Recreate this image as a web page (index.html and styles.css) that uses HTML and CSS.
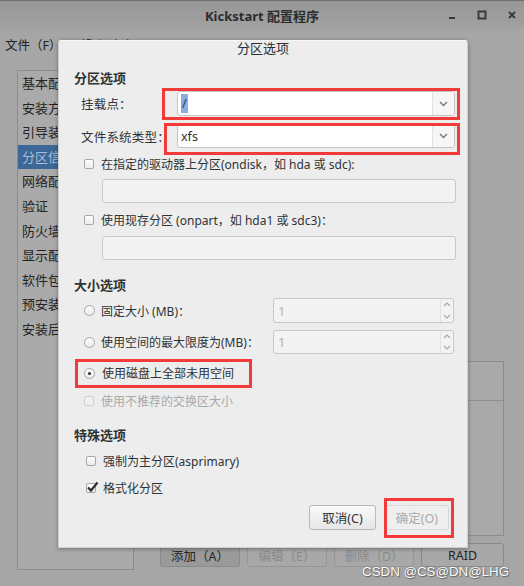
FILE: index.html
```html
<!DOCTYPE html>
<html lang="zh">
<head>
<meta charset="utf-8">
<title>Kickstart 配置程序</title>
<link rel="stylesheet" href="styles.css">
</head>
<body>
<div class="window">
  <div class="titlebar">
    <div></div>
    <div class="wtitle">Kickstart 配置程序</div>
    <div class="wctrls">
      <svg class="wc" width="10" height="10" viewBox="0 0 10 10"><rect x="2" y="7" width="6" height="2" fill="#3a3a3a"/></svg>
      <svg class="wc" width="10" height="10" viewBox="0 0 10 10"><rect x="1.5" y="1.5" width="7" height="7" fill="none" stroke="#3a3a3a" stroke-width="2"/></svg>
      <svg class="wc" width="10" height="10" viewBox="0 0 10 10"><path d="M2 2 L8 8 M8 2 L2 8" stroke="#3a3a3a" stroke-width="2"/></svg>
    </div>
  </div>
  <div class="menubar">
    <span class="menu">文件（F）</span>
    <span class="menu">帮助（H）</span>
  </div>
  <div class="main">
    <ul class="navlist">
      <li>基本配置</li>
      <li>安装方法</li>
      <li>引导装载程序选项</li>
      <li class="active">分区信息</li>
      <li>网络配置</li>
      <li>验证</li>
      <li>防火墙配置</li>
      <li>显示配置</li>
      <li>软件包选择</li>
      <li>预安装脚本</li>
      <li>安装后脚本</li>
    </ul>
    <div class="rightcol">
      <div class="table">
        <div class="thead"></div>
      </div>
      <div class="wbtns">
        <div class="wbtn pressed">添加（A）</div>
        <div class="wbtn off">编辑（E）</div>
        <div class="wbtn off">删除（D）</div>
        <div class="wbtn raid">RAID</div>
      </div>
    </div>
  </div>

  <div class="dialog">
    <div class="dtitle">分区选项</div>

    <div class="heading">分区选项</div>

    <div class="frow r1">
      <span class="flabel">挂载点：</span>
      <div class="combo h25">
        <div class="ctext focus"><span class="sel">/</span></div>
        <div class="cbtn"><svg width="9" height="6" viewBox="0 0 9 6"><path d="M1 1 L4.5 4.5 L8 1" fill="none" stroke="#777" stroke-width="1.4"/></svg></div>
      </div>
    </div>
    <div class="frow r2">
      <span class="flabel">文件系统类型：</span>
      <div class="combo h24">
        <div class="ctext">xfs</div>
        <div class="cbtn"><svg width="9" height="6" viewBox="0 0 9 6"><path d="M1 1 L4.5 4.5 L8 1" fill="none" stroke="#777" stroke-width="1.4"/></svg></div>
      </div>
    </div>

    <div class="crow c1"><span class="cbox"></span><span>在指定的驱动器上分区(ondisk，如 hda 或 sdc):</span></div>
    <div class="entry e1"></div>
    <div class="crow c2"><span class="cbox"></span><span>使用现存分区 (onpart，如 hda1 或 sdc3)：</span></div>
    <div class="entry e2"></div>

    <div class="heading h2">大小选项</div>

    <div class="srow s1">
      <span class="radio"></span><span>固定大小 (MB)：</span>
      <div class="spin h25"><span class="sval">1</span><div class="sarrows">
        <svg width="8" height="5" viewBox="0 0 8 5"><path d="M1 4 L4 1 L7 4" fill="none" stroke="#a8a8a8" stroke-width="1.2"/></svg>
        <svg width="8" height="5" viewBox="0 0 8 5"><path d="M1 1 L4 4 L7 1" fill="none" stroke="#a8a8a8" stroke-width="1.2"/></svg>
      </div></div>
    </div>
    <div class="srow s2">
      <span class="radio"></span><span>使用空间的最大限度为(MB)：</span>
      <div class="spin h24"><span class="sval">1</span><div class="sarrows">
        <svg width="8" height="5" viewBox="0 0 8 5"><path d="M1 4 L4 1 L7 4" fill="none" stroke="#a8a8a8" stroke-width="1.2"/></svg>
        <svg width="8" height="5" viewBox="0 0 8 5"><path d="M1 1 L4 4 L7 1" fill="none" stroke="#a8a8a8" stroke-width="1.2"/></svg>
      </div></div>
    </div>
    <div class="crow s3"><span class="radio on"></span><span>使用磁盘上全部未用空间</span></div>
    <div class="crow s4 disabled"><span class="cbox dis"></span><span>使用不推荐的交换区大小</span></div>

    <div class="heading h3">特殊选项</div>

    <div class="crow k1"><span class="cbox"></span><span>强制为主分区(asprimary)</span></div>
    <div class="crow k2"><span class="cbox checked"><svg width="13" height="12" viewBox="0 0 13 12"><path d="M2 6.5 L5 9.5 L11.5 1.5" fill="none" stroke="#2e2e2e" stroke-width="2.2"/></svg></span><span>格式化分区</span></div>

    <div class="dbtns">
      <div class="btn">取消(C)</div>
      <div class="btn off">确定(O)</div>
    </div>

    <div class="mark m1"></div>
    <div class="mark m2"></div>
    <div class="mark m3"></div>
    <div class="mark m4"></div>
  </div>

  <div class="watermark">CSDN @CS@DN@LHG</div>
</div>
</body>
</html>
```

FILE: styles.css
```css
* { box-sizing: border-box; }
html, body { margin: 0; padding: 0; }
body {
  font-family: "Noto Sans", "Noto Sans CJK SC", sans-serif;
  font-size: 12px;
  color: #2e3436;
}
.window {
  position: relative;
  width: 524px;
  height: 586px;
  background: #a6a6a6;
  overflow: hidden;
}
.titlebar {
  height: 30px;
  display: grid;
  grid-template-columns: 1fr auto 1fr;
  align-items: center;
  background: linear-gradient(#979797, #a2a2a2);
  border-top: 1px solid #6e6e6e;
}
.wtitle {
  font-weight: bold;
  font-size: 13px;
  color: #2c2c2c;
}
.wctrls {
  display: flex;
  justify-content: flex-end;
  gap: 20px;
  padding-right: 7px;
  padding-bottom: 1px;
}
.menubar {
  height: 28px;
  display: flex;
  align-items: center;
  gap: 18px;
  padding-left: 5px;
  font-size: 12.5px;
  color: #222;
}
.main {
  display: flex;
  padding: 12px 20px 0 17px;
}
.navlist {
  list-style: none;
  margin: 0;
  padding: 0;
  width: 117px;
  height: 500px;
  background: #aaaaaa;
  border: 1px solid #8c8c8c;
  font-size: 13px;
  color: #242424;
  overflow: hidden;
}
.navlist li {
  height: 24.6px;
  line-height: 24.6px;
  padding-left: 4px;
  white-space: nowrap;
}
.navlist li.active {
  background: #3c6797;
  color: #a9bcd4;
}
.rightcol {
  flex: 1;
  margin-left: 14px;
  display: flex;
  flex-direction: column;
}
.table {
  margin-top: 291px;
  height: 175px;
  border: 1px solid #8c8c8c;
  background: #a9a9a9;
}
.thead {
  height: 39px;
  border-bottom: 1px solid #8f8f8f;
}
.wbtns {
  display: flex;
  justify-content: flex-end;
  gap: 7px;
  margin-top: 7px;
}
.wbtn {
  width: 80px;
  height: 24px;
  border: 1px solid #8a8a8a;
  border-radius: 3px;
  background: #a8a8a8;
  display: flex;
  align-items: center;
  justify-content: center;
  font-size: 12.5px;
  color: #252525;
}
.wbtn.pressed { background: #9a9a9a; }
.wbtn.off { color: #8b8b8b; border-color: #959595; }
.wbtn.raid { width: 83px; }

/* dialog */
.dialog {
  position: absolute;
  left: 58px;
  top: 40px;
  width: 410px;
  height: 508px;
  background: #ededed;
  border: 1px solid #cfcfcf;
  border-top-color: #f6f6f6;
  border-radius: 3px 3px 0 0;
  box-shadow: 0 1px 4px rgba(0,0,0,0.35);
  padding: 0 13px 0 15px;
}
.dtitle {
  height: 16px;
  line-height: 16px;
  text-align: center;
  font-size: 13px;
  color: #2e2e2e;
  margin-left: -15px;
  margin-right: -13px;
  margin-top: -1px;
}
.heading {
  font-weight: bold;
  font-size: 13px;
  height: 18px;
  line-height: 18px;
  margin-top: 13px;
  color: #2e3436;
}
.heading.h2 { margin-top: 16px; }
.heading.h3 { margin-top: 16px; }

.frow {
  display: flex;
  align-items: center;
  padding-left: 7px;
}
.frow.r1 { margin-top: 4px; }
.frow.r2 { margin-top: 8px; }
.flabel {
  width: 96px;
  flex: none;
  font-size: 12.5px;
  letter-spacing: 0.2px;
  white-space: nowrap;
}
.combo {
  width: 278px;
  flex: none;
  display: flex;
  border: 1px solid #c4c4c4;
  border-radius: 3px;
  background: #fff;
  overflow: hidden;
}
.h25 { height: 25px; }
.h24 { height: 24px; }
.ctext {
  flex: 1;
  display: flex;
  align-items: center;
  padding-left: 3px;
  font-size: 12.5px;
  color: #2e3436;
}
.ctext.focus {
  border-left: 1px solid #7ea9dc;
  border-bottom: 1px solid #7ea9dc;
  border-radius: 2px 0 0 2px;
  margin: -1px 0 -1px -1px;
  padding-left: 3px;
}
.sel {
  background: #86aee0;
  color: #1e3a66;
  padding: 2px 1px;
  line-height: 15px;
}
.cbtn {
  width: 22px;
  display: flex;
  align-items: center;
  justify-content: center;
  background: #f6f6f6;
  border-left: 1px solid #e2e2e2;
}

.crow {
  display: flex;
  align-items: center;
  height: 18px;
  padding-left: 10px;
  gap: 7px;
}
.crow.c1 { margin-top: 7px; }
.crow.c2 { margin-top: 8px; }
.crow.s3 { margin-top: 10px; }
.crow.s4 { margin-top: 10px; }
.crow.k1 { margin-top: 8px; padding-left: 12px; }
.crow.k2 { margin-top: 9px; padding-left: 12px; }
.disabled { color: #a9a9a9; }

.cbox {
  position: relative;
  width: 10px;
  height: 10px;
  border: 1px solid #a8a8a8;
  border-radius: 2px;
  background: linear-gradient(#fdfdfd, #ececec);
  flex: none;
}
.cbox.dis { border-color: #cfcfcf; background: #f0f0f0; }
.cbox.checked svg {
  position: absolute;
  left: -1px;
  top: -3px;
}

.entry {
  margin-left: 28px;
  width: 354px;
  height: 24px;
  background: #f3f3f3;
  border: 1px solid #c8c8c8;
  border-radius: 3px;
}
.entry.e1 { margin-top: 6px; }
.entry.e2 { margin-top: 7px; }

.srow {
  display: flex;
  align-items: center;
  padding-left: 10px;
}
.srow.s1 { margin-top: 4px; }
.srow.s2 { margin-top: 7px; }
.radio {
  width: 11px;
  height: 11px;
  border: 1px solid #a5a5a5;
  border-radius: 50%;
  background: linear-gradient(#fdfdfd, #ebebeb);
  margin-right: 6px;
  flex: none;
  position: relative;
}
.radio.on { margin-right: 0; }
.radio.on::after {
  content: "";
  position: absolute;
  left: 3px;
  top: 3px;
  width: 3px;
  height: 3px;
  border-radius: 50%;
  background: #2e2e2e;
}
.spin {
  margin-left: auto;
  width: 181px;
  display: flex;
  align-items: center;
  background: #f3f3f3;
  border: 1px solid #c8c8c8;
  border-radius: 3px;
}
.sval {
  flex: 1;
  padding-left: 4px;
  font-size: 13px;
  color: #b2b2b2;
}
.sarrows {
  width: 13px;
  height: 100%;
  display: flex;
  flex-direction: column;
  justify-content: space-around;
  align-items: center;
  border-left: 1px solid #e3e3e3;
}

.dbtns {
  display: flex;
  justify-content: flex-end;
  gap: 9px;
  margin-top: 8px;
  padding-right: 5px;
}
.btn {
  width: 67px;
  height: 25px;
  border: 1px solid #b9b9b9;
  border-radius: 3px;
  background: linear-gradient(#fafafa, #e6e6e6);
  display: flex;
  align-items: center;
  justify-content: center;
  font-size: 12.5px;
  color: #2e3436;
}
.btn.off {
  width: 64px;
  background: #efefef;
  border-color: #d8d8d8;
  color: #ababab;
}

.mark {
  position: absolute;
  border: 3px solid #f23a3a;
}
.m1 { left: 103px; top: 47px; width: 298px; height: 32px; }
.m2 { left: 105px; top: 82px; width: 296px; height: 32px; }
.m3 { left: 16px; top: 318px; width: 177px; height: 29px; }
.m4 { left: 325px; top: 457px; width: 70px; height: 40px; }

.watermark {
  position: absolute;
  right: 15px;
  bottom: 7px;
  font-family: "Liberation Sans", Arial, sans-serif;
  font-size: 13.3px;
  color: #ffffff;
  text-shadow: 0 0 1px #555, 1px 1px 1px #666;
}
```
